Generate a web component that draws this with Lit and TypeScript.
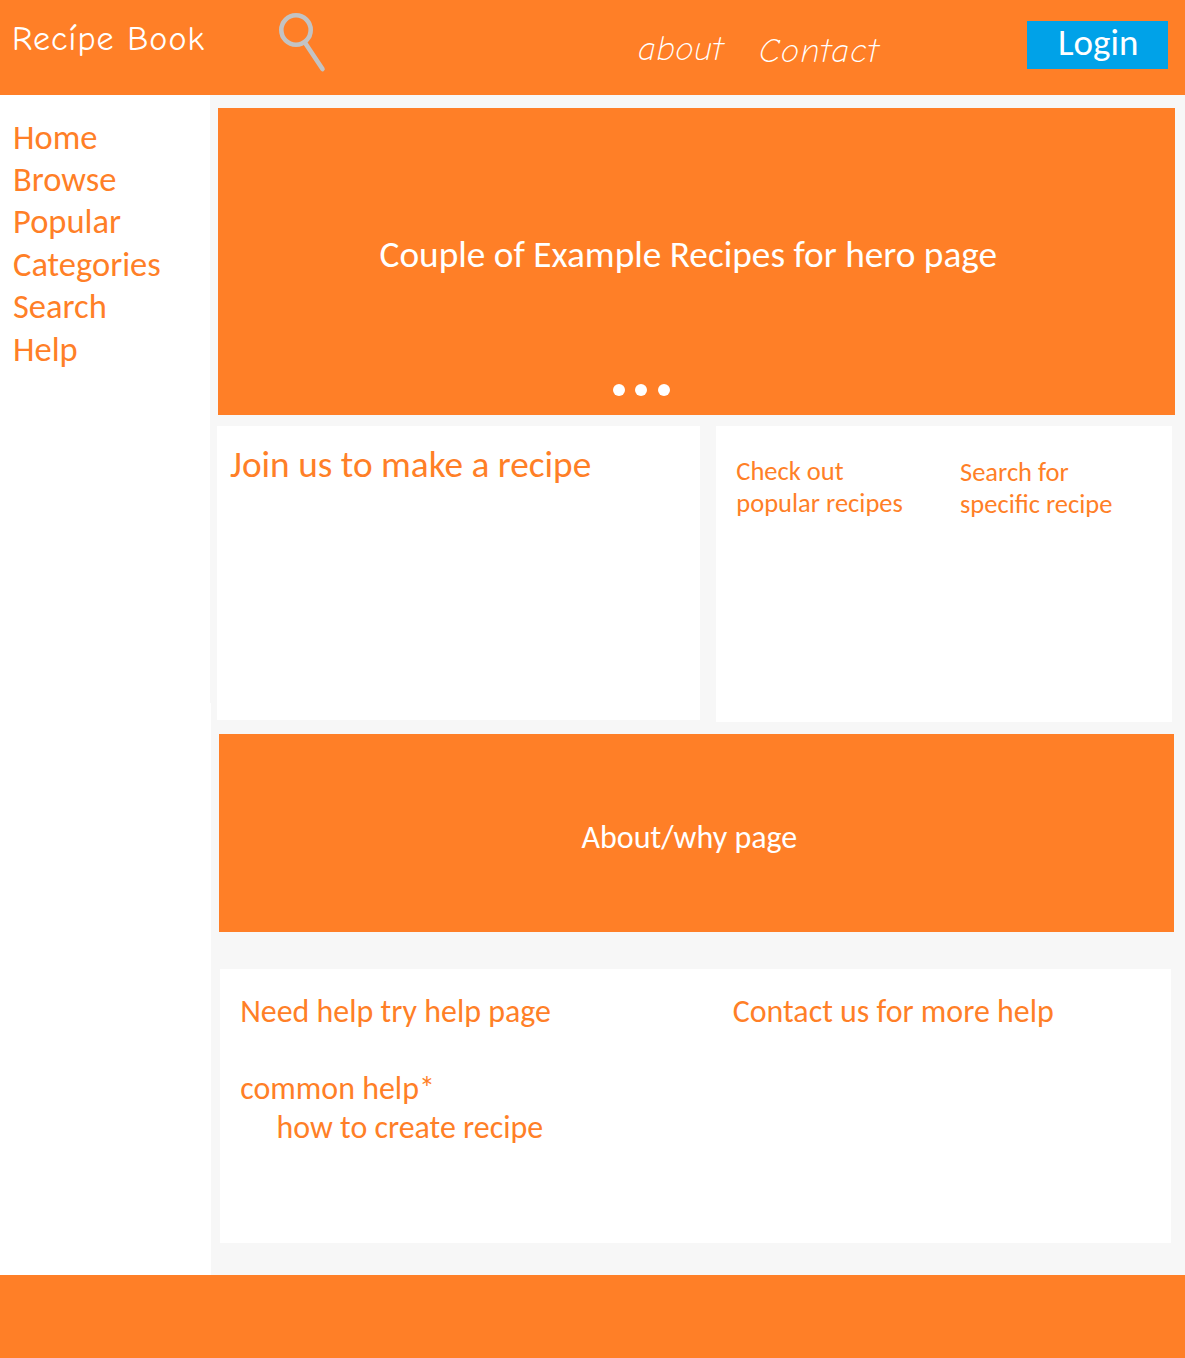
import { LitElement, html, css } from "lit";
import { customElement } from "lit/decorators.js";

const NAV_ITEMS = ["Home", "Browse", "Popular", "Categories", "Search", "Help"];

@customElement("app-root")
export class AppRoot extends LitElement {
  static styles = css`
    :host {
      display: block;
      --orange: #ff7f27;
      --grey: #f7f7f7;
      color: var(--orange);
      font-family: Carlito, Calibri, Lato, "Liberation Sans", sans-serif;
    }
    * {
      box-sizing: border-box;
      margin: 0;
      padding: 0;
    }
    .page {
      display: flex;
      flex-direction: column;
      width: 1185px;
      height: 1358px;
      overflow: hidden;
      background: var(--grey);
      white-space: nowrap;
    }

    /* Header */
    .header {
      display: flex;
      align-items: flex-start;
      flex: 0 0 95px;
      background: var(--orange);
      color: #fff;
    }
    .hand {
      font-family: "Comic Neue", "Bradley Hand ITC", Lato, cursive;
      font-weight: 300;
      line-height: 40px;
    }
    .logo {
      width: 278px;
      padding: 19px 0 0 12px;
      font-size: 34px;
      font-weight: 400;
      letter-spacing: 1.1px;
    }
    .search-icon {
      width: 50px;
      height: 62px;
      margin: 12px 310px 0 0;
    }
    .link {
      font-size: 34px;
      font-style: italic;
    }
    .link-about {
      width: 121px;
      padding-top: 29px;
      letter-spacing: 0.3px;
    }
    .link-contact {
      width: 268px;
      padding-top: 31px;
      letter-spacing: 1.1px;
    }
    .login {
      display: block;
      width: 141px;
      height: 48px;
      margin-top: 21px;
      padding: 0 0 4px 31px;
      border: 0;
      background: #00a2e8;
      color: #fff;
      font-family: inherit;
      font-size: 37px;
      line-height: 44px;
      text-align: left;
    }

    /* Body */
    .body {
      display: flex;
      flex: 1 1 auto;
    }
    .sidebar {
      width: 211px;
      padding: 20.6px 0 0 13px;
      background: linear-gradient(var(--grey), var(--grey)) 210px 0 / 1px 608px
          no-repeat,
        #fff;
      font-size: 34.5px;
      line-height: 42.4px;
      list-style: none;
    }
    .main {
      flex: 1;
      padding-top: 13px;
    }
    .hero {
      width: 957px;
      height: 307px;
      margin-left: 7px;
      padding: 123.8px 0 0 161.5px;
      background: var(--orange);
      color: #fff;
    }
    .title {
      font-size: 37.3px;
      font-weight: 400;
      line-height: 44px;
    }
    .dots {
      display: flex;
      gap: 10px;
      margin: 108.2px 0 0 233.5px;
    }
    .dot {
      width: 12px;
      height: 12px;
      border-radius: 50%;
      background: #fff;
    }
    .dot:last-child {
      margin-left: 1px;
    }
    .cards {
      display: flex;
      align-items: flex-start;
      gap: 16px;
      margin: 11px 0 0 6px;
    }
    .card {
      background: #fff;
    }
    .card-join {
      width: 483px;
      height: 294px;
      padding: 16.3px 0 0 13px;
    }
    .card-find {
      display: flex;
      width: 456px;
      height: 296px;
      padding: 29.4px 0 0 20.3px;
      font-size: 26.5px;
      line-height: 32px;
    }
    .find-popular {
      width: 223.7px;
    }
    .find-search {
      padding-top: 1px;
    }
    .about {
      width: 955px;
      height: 198px;
      margin: 12px 0 0 8px;
      padding: 84px 0 0 362.5px;
      background: var(--orange);
      color: #fff;
      font-size: 32px;
      line-height: 40px;
    }
    .help {
      display: flex;
      width: 951px;
      height: 274px;
      margin: 37px 0 0 9px;
      padding: 23.5px 0 0 20.2px;
      font-size: 31.95px;
      line-height: 38.75px;
    }
    .help-left {
      width: 492.5px;
    }
    .common {
      margin-top: 38.75px;
    }
    .how {
      padding-left: 36.3px;
    }
    .footer {
      flex: 0 0 83px;
      background: var(--orange);
    }
  `;

  render() {
    return html`
      <div class="page">
        <header class="header">
          <div class="hand logo">Recípe Book</div>
          <svg class="search-icon" viewBox="0 0 50 62" fill="none" stroke="#c3c3c3">
            <circle cx="18" cy="18" r="14.7" stroke-width="4.6" />
            <path d="M27.5 31.5 L44.5 57" stroke-width="4.6" stroke-linecap="round" />
          </svg>
          <a class="hand link link-about">about</a>
          <a class="hand link link-contact">Contact</a>
          <button class="login">Login</button>
        </header>
        <div class="body">
          <ul class="sidebar">
            ${NAV_ITEMS.map((item) => html`<li>${item}</li>`)}
          </ul>
          <main class="main">
            <section class="hero">
              <h1 class="title">Couple of Example Recipes for hero page</h1>
              <div class="dots">
                <span class="dot"></span>
                <span class="dot"></span>
                <span class="dot"></span>
              </div>
            </section>
            <div class="cards">
              <section class="card card-join">
                <h2 class="title">Join us to make a recipe</h2>
              </section>
              <section class="card card-find">
                <p class="find-popular">Check out<br />popular recipes</p>
                <p class="find-search">Search for<br />specific recipe</p>
              </section>
            </div>
            <section class="about">About/why page</section>
            <section class="card help">
              <div class="help-left">
                <p>Need help try help page</p>
                <p class="common">common help*</p>
                <p class="how">how to create recipe</p>
              </div>
              <p>Contact us for more help</p>
            </section>
          </main>
        </div>
        <footer class="footer"></footer>
      </div>
    `;
  }
}
